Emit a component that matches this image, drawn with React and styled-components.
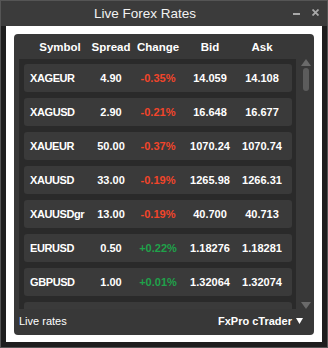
import React from 'react';
import styled, { createGlobalStyle } from 'styled-components';

const GlobalStyle = createGlobalStyle`
  html, body {
    margin: 0;
    padding: 0;
    background: #1e1e1e;
  }
  * {
    box-sizing: border-box;
  }
`;

const Window = styled.div`
  width: 328px;
  height: 348px;
  border: 1px solid #555555;
  background: #1e1e1e;
  display: flex;
  flex-direction: column;
  font-family: "Liberation Sans", Arial, sans-serif;
  color: #ffffff;
`;

const TitleBar = styled.div`
  height: 25px;
  flex: none;
  background: #3b3b3b;
  position: relative;
  display: flex;
  align-items: center;
  justify-content: center;
  padding-right: 38px;
  font-size: 13.5px;
  color: #f2f2f2;
`;

const TitleButtons = styled.div`
  position: absolute;
  right: 8px;
  top: 8px;
  display: flex;
  align-items: flex-end;
  gap: 12px;
`;

const Body = styled.div`
  flex: 1;
  padding: 0 5px 5px 5px;
  display: flex;
`;

const Sheet = styled.div`
  flex: 1;
  background: #ffffff;
  padding: 8px 8px 7px 8px;
  display: flex;
`;

const Panel = styled.div`
  flex: 1;
  background: #383838;
  border-radius: 4px;
  display: flex;
  flex-direction: column;
  padding: 0 0 0 5px;
`;

const Columns = styled.div`
  display: grid;
  grid-template-columns: 60px 42px 52px 52px 52px;
  align-items: center;
`;

const HeaderRow = styled(Columns)`
  height: 25px;
  padding: 1px 0 0 11px;
  font-size: 11.5px;
  font-weight: bold;
  text-align: center;
`;

const Middle = styled.div`
  display: flex;
  height: 250px;
`;

const Viewport = styled.div`
  width: 277px;
  background: #2a2a2a;
  overflow: hidden;
  padding: 5px 4px 0 5px;
  display: flex;
  flex-direction: column;
  gap: 6px;
`;

const Row = styled(Columns)`
  flex: none;
  height: 28px;
  background: #3a3a3a;
  border-radius: 3px;
  padding-left: 6px;
  font-size: 11px;
  font-weight: bold;
  text-align: center;
`;

const Symbol = styled.span`
  text-align: left;
  letter-spacing: -0.4px;
`;

const Change = styled.span`
  color: ${(p) => (p.$up ? '#1fa24a' : '#f2452a')};
`;

const ScrollBar = styled.div`
  flex: 1;
  display: flex;
  flex-direction: column;
  align-items: center;
  padding: 0 0 0 1px;
`;

const Thumb = styled.div`
  width: 6px;
  height: 23px;
  margin-top: 2px;
  border-radius: 3px;
  background: #5c5c5c;
`;

const Spacer = styled.div`
  flex: 1;
`;

const Footer = styled.div`
  flex: 1;
  display: flex;
  align-items: center;
  justify-content: space-between;
  padding: 0 11px 2px 0;
  font-size: 11px;
`;

const Broker = styled.span`
  font-weight: bold;
  display: flex;
  align-items: center;
  gap: 4px;
`;

const rates = [
  ['XAGEUR', '4.90', '-0.35%', '14.059', '14.108'],
  ['XAGUSD', '2.90', '-0.21%', '16.648', '16.677'],
  ['XAUEUR', '50.00', '-0.37%', '1070.24', '1070.74'],
  ['XAUUSD', '33.00', '-0.19%', '1265.98', '1266.31'],
  ['XAUUSDgr', '13.00', '-0.19%', '40.700', '40.713'],
  ['EURUSD', '0.50', '+0.22%', '1.18276', '1.18281'],
  ['GBPUSD', '1.00', '+0.01%', '1.32064', '1.32074'],
];

const Arrow = ({ down }) => (
  <svg width="10" height="7" viewBox="0 0 10 7">
    <path d={down ? 'M0 0 H10 L5 7 Z' : 'M0 7 H10 L5 0 Z'} fill="#6a6a6a" />
  </svg>
);

const App = () => (
  <>
    <GlobalStyle />
    <Window>
      <TitleBar>
        Live Forex Rates
        <TitleButtons>
          <svg width="7" height="3" viewBox="0 0 7 3">
            <rect x="0" y="0" width="7" height="2" fill="#a8a8a8" />
          </svg>
          <svg width="7" height="7" viewBox="0 0 7 7">
            <path d="M0.5 0.5 L6.5 6.5 M6.5 0.5 L0.5 6.5" stroke="#a8a8a8" strokeWidth="1.8" />
          </svg>
        </TitleButtons>
      </TitleBar>
      <Body>
        <Sheet>
          <Panel>
            <HeaderRow>
              <span>Symbol</span>
              <span>Spread</span>
              <span>Change</span>
              <span>Bid</span>
              <span>Ask</span>
            </HeaderRow>
            <Middle>
              <Viewport>
                {rates.map(([sym, spread, change, bid, ask]) => (
                  <Row key={sym}>
                    <Symbol>{sym}</Symbol>
                    <span>{spread}</span>
                    <Change $up={change.startsWith('+')}>{change}</Change>
                    <span>{bid}</span>
                    <span>{ask}</span>
                  </Row>
                ))}
                {/* next row, scrolled below the fold */}
                <Row />
              </Viewport>
              <ScrollBar>
                <Arrow />
                <Thumb />
                <Spacer />
                <Arrow down />
              </ScrollBar>
            </Middle>
            <Footer>
              <span>Live rates</span>
              <Broker>
                FxPro cTrader
                <svg width="7" height="6" viewBox="0 0 7 6">
                  <path d="M0 0 H7 L3.5 6 Z" fill="#ffffff" />
                </svg>
              </Broker>
            </Footer>
          </Panel>
        </Sheet>
      </Body>
    </Window>
  </>
);

export default App;
